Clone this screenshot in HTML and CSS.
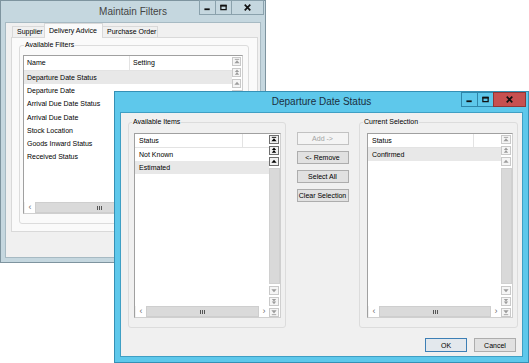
FILE: index.html
```html
<!DOCTYPE html>
<html lang="en">
<head>
    <meta charset="UTF-8">
    <meta name="viewport" content="width=device-width, initial-scale=1.0">
    <title>Maintain Filters</title>
    <link rel="stylesheet" href="styles.css">
</head>
<body>
    <!-- Iconos de las barras de desplazamiento -->
    <svg class="defs" width="0" height="0" aria-hidden="true">
        <symbol id="i-first" viewBox="0 0 9 8"><rect x="2" y="1" width="5" height="1"/><path d="M4.5 2.5L1.5 6h6z"/></symbol>
        <symbol id="i-pgup" viewBox="0 0 9 8"><path d="M4.5 0.5L2 3.5h5zM4.5 3.5L2 6.5h5z"/></symbol>
        <symbol id="i-up" viewBox="0 0 9 8"><path d="M4.5 2L1.5 5.5h6z"/></symbol>
        <symbol id="i-down" viewBox="0 0 9 8"><path d="M1.5 2.5h6L4.5 6z"/></symbol>
        <symbol id="i-pgdn" viewBox="0 0 9 8"><path d="M2 1h5L4.5 4zM2 4h5L4.5 7z"/></symbol>
        <symbol id="i-last" viewBox="0 0 9 8"><path d="M1.5 1.5h6L4.5 5z"/><rect x="2" y="6" width="5" height="1"/></symbol>
    </svg>

    <!-- Ventana principal -->
    <div class="win back">
        <div class="titlebar">
            <div class="caption">Maintain Filters</div>
            <div class="caption-btns">
                <span class="cbtn"><svg viewBox="0 0 17 14"><rect x="5" y="8" width="6" height="2"/></svg></span>
                <span class="cbtn"><svg viewBox="0 0 17 14"><path d="M5.5 4.5h6v5h-6z" fill="none" stroke="currentColor" stroke-width="1.4"/><rect x="5" y="4" width="7" height="2"/></svg></span>
                <span class="cbtn close"><svg viewBox="0 0 32 14"><path d="M13 4l6 6M19 4l-6 6" stroke="currentColor" stroke-width="1.8"/></svg></span>
            </div>
        </div>
        <div class="client">
            <div class="tabs">
                <span class="tab t-supplier">Supplier</span>
                <span class="tab t-delivery active">Delivery Advice</span>
                <span class="tab t-purchase">Purchase Order</span>
            </div>
            <div class="tab-panel">
                <div class="group filters-group">
                    <div class="legend">Available Filters</div>
                    <div class="list filters">
                        <div class="list-body">
                            <div class="list-head"><span class="c1">Name</span><span>Setting</span></div>
                            <div class="row sel">Departure Date Status</div>
                            <div class="row">Departure Date</div>
                            <div class="row">Arrival Due Date Status</div>
                            <div class="row">Arrival Due Date</div>
                            <div class="row">Stock Location</div>
                            <div class="row">Goods Inward Status</div>
                            <div class="row">Received Status</div>
                        </div>
                        <div class="vscroll">
                            <span class="sbtn"><svg><use href="#i-first"/></svg></span>
                            <span class="sbtn"><svg><use href="#i-pgup"/></svg></span>
                            <span class="sbtn"><svg><use href="#i-up"/></svg></span>
                            <span class="vthumb"></span>
                        </div>
                        <div class="hscroll">
                            <span class="hbtn">&lsaquo;</span>
                            <span class="hthumb short"><i class="grip"></i></span>
                            <span class="hbtn">&rsaquo;</span>
                        </div>
                    </div>
                </div>
            </div>
        </div>
    </div>

    <!-- Dialogo -->
    <div class="win dialog">
        <div class="titlebar">
            <div class="caption">Departure Date Status</div>
            <div class="caption-btns">
                <span class="cbtn"><svg viewBox="0 0 17 14"><rect x="5" y="8" width="6" height="2"/></svg></span>
                <span class="cbtn"><svg viewBox="0 0 17 14"><path d="M5.5 4.5h6v5h-6z" fill="none" stroke="currentColor" stroke-width="1.4"/><rect x="5" y="4" width="7" height="2"/></svg></span>
                <span class="cbtn close"><svg viewBox="0 0 32 14"><path d="M13 4l6 6M19 4l-6 6" stroke="currentColor" stroke-width="1.8"/></svg></span>
            </div>
        </div>
        <div class="client">
            <div class="pickers">
                <div class="group">
                    <div class="legend">Available Items</div>
                    <div class="list items">
                        <div class="list-body">
                            <div class="list-head"><span class="c1">Status</span><span></span></div>
                            <div class="row">Not Known</div>
                            <div class="row sel">Estimated</div>
                        </div>
                        <div class="vscroll on">
                            <span class="sbtn"><svg><use href="#i-first"/></svg></span>
                            <span class="sbtn"><svg><use href="#i-pgup"/></svg></span>
                            <span class="sbtn"><svg><use href="#i-up"/></svg></span>
                            <span class="vthumb"></span>
                            <span class="sbtn off"><svg><use href="#i-down"/></svg></span>
                            <span class="sbtn off"><svg><use href="#i-pgdn"/></svg></span>
                            <span class="sbtn off"><svg><use href="#i-last"/></svg></span>
                        </div>
                        <div class="hscroll">
                            <span class="hbtn">&lsaquo;</span>
                            <span class="hthumb"><i class="grip"></i></span>
                            <span class="hbtn">&rsaquo;</span>
                        </div>
                    </div>
                </div>

                <div class="moves">
                    <button class="btn" disabled>Add -&gt;</button>
                    <button class="btn">&lt;- Remove</button>
                    <button class="btn">Select All</button>
                    <button class="btn">Clear Selection</button>
                </div>

                <div class="group">
                    <div class="legend">Current Selection</div>
                    <div class="list selection">
                        <div class="list-body">
                            <div class="list-head"><span class="c1">Status</span><span></span></div>
                            <div class="row sel">Confirmed</div>
                        </div>
                        <div class="vscroll">
                            <span class="sbtn"><svg><use href="#i-first"/></svg></span>
                            <span class="sbtn"><svg><use href="#i-pgup"/></svg></span>
                            <span class="sbtn"><svg><use href="#i-up"/></svg></span>
                            <span class="vthumb"></span>
                            <span class="sbtn"><svg><use href="#i-down"/></svg></span>
                            <span class="sbtn"><svg><use href="#i-pgdn"/></svg></span>
                            <span class="sbtn"><svg><use href="#i-last"/></svg></span>
                        </div>
                        <div class="hscroll">
                            <span class="hbtn">&lsaquo;</span>
                            <span class="hthumb"><i class="grip"></i></span>
                            <span class="hbtn">&rsaquo;</span>
                        </div>
                    </div>
                </div>
            </div>

            <div class="actions">
                <button class="btn ok">OK</button>
                <button class="btn">Cancel</button>
            </div>
        </div>
    </div>
</body>
</html>
```

FILE: styles.css
```css
* {
    box-sizing: border-box;
}
body {
    margin: 0;
    width: 529px;
    height: 363px;
    position: relative;
    overflow: hidden;
    background: #fff;
    font-family: "Liberation Sans", Arial, sans-serif;
    font-size: 7px;
    color: #000;
}
.defs {
    position: absolute;
}

/* Ventanas */
.win {
    position: absolute;
    display: flex;
    flex-direction: column;
    border: 1px solid;
}
.back {
    left: 0;
    top: 0;
    width: 266px;
    height: 263px;
    padding: 0 4px 4px 4px;
    background: #c5d7df;
    border-color: #7e949f;
}
.dialog {
    left: 114px;
    top: 91px;
    width: 415px;
    height: 272px;
    padding: 0 5px 5px 5px;
    background: #5ec8eb;
    border-color: #3590b5;
}
.titlebar {
    display: grid;
    grid-template-columns: 1fr auto 1fr;
    height: 21px;
}
.dialog .titlebar {
    height: 20px;
}
.caption {
    grid-column: 2;
    font-size: 10px;
    line-height: 21px;
    color: #444;
}
.dialog .caption {
    line-height: 20px;
    color: #1b2f40;
}
.caption-btns {
    grid-column: 3;
    justify-self: end;
    display: flex;
    margin-right: -3px;
    margin-top: -1px;
}
.dialog .caption-btns {
    margin-top: 0;
}
.cbtn {
    width: 17px;
    height: 15px;
    margin-left: -1px;
    border: 1px solid #8aa1ac;
    color: #111;
}
.cbtn.close {
    width: 33px;
}
.cbtn svg {
    display: block;
    width: 100%;
    height: 100%;
    fill: currentColor;
}
.dialog .cbtn {
    border-color: #2f86aa;
}
.dialog .cbtn.close {
    background: #c75050;
    border-color: #8f3535;
}
.client {
    flex: 1;
    background: #f0f0f0;
    border: 1px solid #a7bac3;
}
.dialog .client {
    border-color: #3f9fc4;
    padding: 9px 4px 0 7px;
}

/* Pestañas */
.tabs {
    display: flex;
    align-items: flex-end;
    height: 15px;
    margin-bottom: -1px;
    padding-left: 6px;
    position: relative;
    z-index: 1;
}
.tab {
    height: 12px;
    padding-left: 4px;
    line-height: 10px;
    border: 1px solid #d9d9d9;
    background: #f0f0f0;
    white-space: nowrap;
}
.tab + .tab {
    margin-left: -1px;
}
.tab.active {
    height: 15px;
    line-height: 13px;
    border-bottom: none;
    background: #fafafa;
    position: relative;
}
.t-supplier { width: 33px; }
.t-delivery { width: 59px; }
.t-purchase { width: 56px; }
.tab-panel {
    width: 247px;
    height: 195px;
    margin-left: 5px;
    padding: 7px 0 0 7px;
    background: #fafafa;
    border: 1px solid #d9d9d9;
}

/* Grupos */
.group {
    display: flex;
    flex-direction: column;
    align-items: flex-start;
    border: 1px solid #dcdcdc;
    border-radius: 3px;
}
.filters-group {
    width: 230px;
    height: 179px;
}
.legend {
    line-height: 10px;
    margin: -6px 0 0 3px;
    padding: 0 1px;
    background: #f0f0f0;
}
.filters-group .legend {
    margin-left: 4px;
    background: #fafafa;
}

/* Listas */
.list {
    display: grid;
    grid-template-columns: 1fr 11px;
    grid-template-rows: 1fr 11px;
    background: #fff;
    border: 1px solid #a0a0a0;
    border-right-color: #cfcfcf;
    border-bottom-color: #cfcfcf;
}
.filters {
    width: 220px;
    height: 159px;
    margin: 5px 0 0 3px;
    grid-template-columns: 1fr 10px;
}
.items {
    width: 147px;
    height: 185px;
    margin: 6px 0 0 5px;
}
.selection {
    width: 146px;
    height: 185px;
    margin: 6px 0 0 7px;
}
.list-body {
    grid-column: 1;
    grid-row: 1;
    overflow: hidden;
}
.list-head {
    display: flex;
    height: 14px;
    border-bottom: 1px solid #e3e3e3;
}
.list-head span {
    padding-left: 4px;
    line-height: 13px;
}
.list-head .c1 {
    width: 108px;
    border-right: 1px solid #e3e3e3;
}
.selection .list-head .c1 {
    width: 106px;
}
.filters .list-head {
    height: 15px;
}
.filters .list-head span {
    padding-left: 3px;
    line-height: 14px;
}
.filters .list-head .c1 {
    width: 106px;
}
.row {
    height: 13px;
    line-height: 13px;
    padding-left: 4px;
    white-space: nowrap;
}
.filters .row {
    height: 13.2px;
    padding-left: 3px;
}
.row.sel {
    background: #e8e8e8;
}

/* Barras de desplazamiento */
.vscroll {
    grid-column: 2;
    grid-row: 1 / 3;
    display: flex;
    flex-direction: column;
    gap: 2px;
    padding-top: 1px;
}
.sbtn {
    width: 10px;
    height: 9px;
    flex: none;
    border: 1px solid #c9c9c9;
    background: #f5f5f5;
    color: #9c9c9c;
}
.filters .sbtn {
    width: 9px;
}
.sbtn svg {
    display: block;
    width: 8px;
    height: 7px;
    fill: currentColor;
}
.vscroll.on .sbtn {
    border-color: #6f6f6f;
    background: #f2f2f2;
    color: #000;
}
.vscroll.on .sbtn.off {
    border-color: #c9c9c9;
    background: #f5f5f5;
    color: #9c9c9c;
}
.vthumb {
    flex: 1;
    background: #d9d9d9;
    border: 1px solid #d0d0d0;
}
.hscroll {
    grid-column: 1;
    grid-row: 2;
    display: flex;
    padding-left: 1px;
    background: #f0f0f0;
}
.hbtn {
    width: 10px;
    background: #fff;
    color: #707070;
    font-size: 9px;
    line-height: 10px;
    text-align: center;
}
.hthumb {
    flex: 1;
    display: flex;
    align-items: center;
    justify-content: center;
    background: #dadada;
    border: 1px solid #cecece;
}
.hthumb.short {
    margin-right: 58px;
}
.grip {
    width: 5px;
    height: 4px;
    background: repeating-linear-gradient(90deg, #555 0 1px, transparent 1px 2px);
}

/* Dialogo */
.pickers {
    display: grid;
    grid-template-columns: 158px 73px 159px;
    height: 206px;
}
.moves {
    display: flex;
    flex-direction: column;
    align-items: center;
    gap: 6px;
    padding-top: 10px;
}
.btn {
    font: inherit;
    width: 52px;
    height: 13px;
    padding: 0;
    line-height: 11px;
    border: 1px solid #adadad;
    background: #e1e1e1;
    color: #000;
    white-space: nowrap;
}
.btn:disabled {
    border-color: #c2c2c2;
    background: #f4f4f4;
    color: #a3a3a3;
}
.actions {
    display: flex;
    justify-content: flex-end;
    gap: 7px;
    margin-top: 10px;
    padding-right: 2px;
}
.actions .btn {
    width: 42px;
    height: 14px;
}
.btn.ok {
    border-color: #3d7fb5;
    background: #e3e8ed;
}
```
